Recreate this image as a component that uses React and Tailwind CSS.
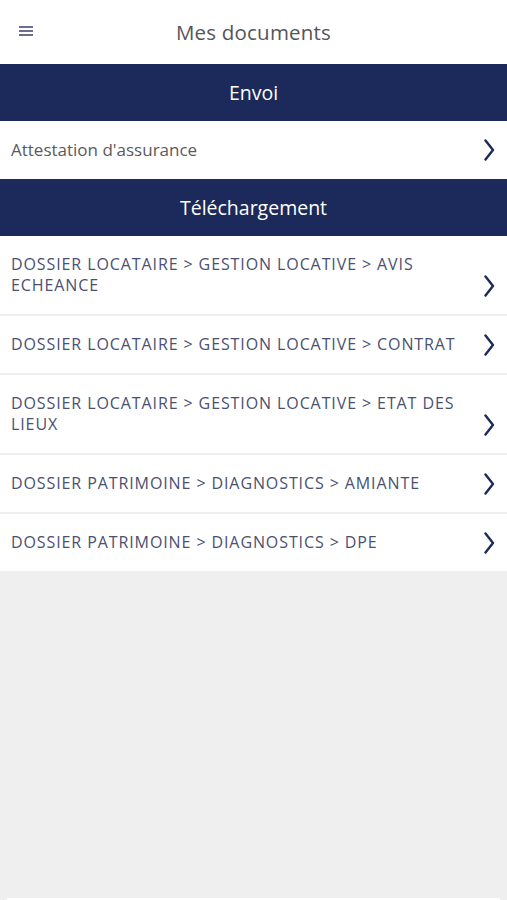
import React from 'react';

const sections = [
  {
    title: 'Envoi',
    items: [{ label: "Attestation d'assurance", caps: false }],
  },
  {
    title: 'Téléchargement',
    items: [
      { label: 'DOSSIER LOCATAIRE > GESTION LOCATIVE > AVIS ECHEANCE', caps: true },
      { label: 'DOSSIER LOCATAIRE > GESTION LOCATIVE > CONTRAT', caps: true },
      { label: 'DOSSIER LOCATAIRE > GESTION LOCATIVE > ETAT DES LIEUX', caps: true },
      { label: 'DOSSIER PATRIMOINE > DIAGNOSTICS > AMIANTE', caps: true },
      { label: 'DOSSIER PATRIMOINE > DIAGNOSTICS > DPE', caps: true },
    ],
  },
];

const Chevron = ({ className = '' }) => (
  <svg width="12" height="22" viewBox="0 0 12 22" fill="none" className={`shrink-0 ${className}`}>
    <path d="M2.5 1.5 L10 11 L2.5 20.5" stroke="#1c2a5a" strokeWidth="2.4" strokeLinecap="round" strokeLinejoin="round" />
  </svg>
);

const Row = ({ item, last }) => {
  if (!item.caps) {
    return (
      <div className="flex h-[58px] items-center justify-between bg-white pl-[11px] pr-[12px]">
        <span className="text-[17px] text-[#5a5a60]">{item.label}</span>
        <Chevron />
      </div>
    );
  }
  // chevron sits level with the last line of text
  return (
    <div
      className={`flex items-end justify-between bg-white py-[18px] pl-[11px] pr-[12px] ${
        last ? '' : 'border-b-2 border-[#efefef]'
      }`}
    >
      <span className="pr-[20px] text-[16px] leading-[21px] text-[#4a5072] tracking-[0.9px]">{item.label}</span>
      <Chevron className="-mb-px" />
    </div>
  );
};

export default function App() {
  return (
    <div className="flex h-[900px] flex-col bg-[#efefef]" style={{ fontFamily: '"Open Sans", "Liberation Sans", sans-serif' }}>
      <header className="relative flex h-[64px] items-center justify-center bg-white">
        <button className="absolute left-[19px] top-[26px] flex w-[14px] flex-col gap-[2px]">
          <span className="h-[2px] w-full bg-[#6a6f90]" />
          <span className="h-[2px] w-full bg-[#6a6f90]" />
          <span className="h-[2px] w-full bg-[#6a6f90]" />
        </button>
        <h1 className="text-[20.5px] text-[#555559] tracking-[0.2px]">Mes documents</h1>
      </header>

      {sections.map((section) => (
        <section key={section.title}>
          <div className="flex h-[57px] items-center justify-center bg-[#1b2a5a] text-[19.5px] text-white">
            {section.title}
          </div>
          {section.items.map((item, i) => (
            <Row key={item.label} item={item} last={i === section.items.length - 1} />
          ))}
        </section>
      ))}

      <div className="flex-1" />
      <div className="mx-[7px] h-[2px] bg-white" />
    </div>
  );
}
